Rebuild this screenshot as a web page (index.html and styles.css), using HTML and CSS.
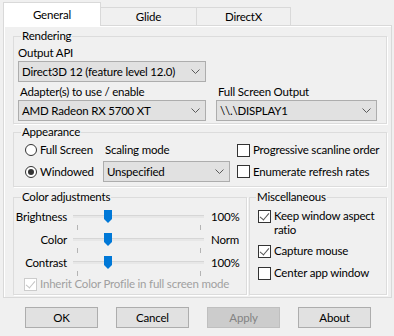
FILE: index.html
```html
<!DOCTYPE html>
<html lang="en">
<head>
    <meta charset="UTF-8">
    <title>Settings</title>
    <link rel="stylesheet" href="styles.css">
</head>
<body>
    <div class="dialog">
        <div class="tabs">
            <div class="tab active">General</div>
            <div class="tab glide">Glide</div>
            <div class="tab directx">DirectX</div>
        </div>

        <div class="panel">
            <fieldset class="group rendering">
                <legend>Rendering</legend>
                <div class="label">Output API</div>
                <div class="select wide">Direct3D 12 (feature level 12.0)<svg class="chevron" width="9" height="5" viewBox="0 0 9 5"><polyline points="0.5,0.5 4.5,4.5 8.5,0.5"/></svg></div>
                <div class="render-row">
                    <div>
                        <div class="label">Adapter(s) to use / enable</div>
                        <div class="select">AMD Radeon RX 5700 XT<svg class="chevron" width="9" height="5" viewBox="0 0 9 5"><polyline points="0.5,0.5 4.5,4.5 8.5,0.5"/></svg></div>
                    </div>
                    <div>
                        <div class="label">Full Screen Output</div>
                        <div class="select">\\.\DISPLAY1<svg class="chevron" width="9" height="5" viewBox="0 0 9 5"><polyline points="0.5,0.5 4.5,4.5 8.5,0.5"/></svg></div>
                    </div>
                </div>
            </fieldset>

            <fieldset class="group appearance">
                <legend>Appearance</legend>
                <div class="appearance-grid">
                    <div class="option"><span class="radio"></span>Full Screen</div>
                    <div class="label scaling-label">Scaling mode</div>
                    <div class="option"><span class="check"></span>Progressive scanline order</div>
                    <div class="option"><span class="radio on"></span>Windowed</div>
                    <div class="select scaling">Unspecified<svg class="chevron" width="9" height="5" viewBox="0 0 9 5"><polyline points="0.5,0.5 4.5,4.5 8.5,0.5"/></svg></div>
                    <div class="option"><span class="check"></span>Enumerate refresh rates</div>
                </div>
            </fieldset>

            <div class="bottom-groups">
                <fieldset class="group colors">
                    <legend>Color adjustments</legend>
                    <div class="slider-row">
                        <div class="slider-label">Brightness</div>
                        <div class="slider"><div class="track"></div><span class="thumb"></span><span class="tick left"></span><span class="tick right"></span></div>
                        <div class="slider-value">100%</div>
                    </div>
                    <div class="slider-row">
                        <div class="slider-label">Color</div>
                        <div class="slider"><div class="track"></div><span class="thumb"></span><span class="tick left"></span><span class="tick right"></span></div>
                        <div class="slider-value">Norm</div>
                    </div>
                    <div class="slider-row">
                        <div class="slider-label">Contrast</div>
                        <div class="slider"><div class="track"></div><span class="thumb"></span><span class="tick left"></span><span class="tick right"></span></div>
                        <div class="slider-value">100%</div>
                    </div>
                    <div class="option disabled inherit"><span class="check checked"></span>Inherit Color Profile in full screen mode</div>
                </fieldset>

                <fieldset class="group misc">
                    <legend>Miscellaneous</legend>
                    <div class="option two-line"><span class="check checked"></span><span>Keep window aspect<br>ratio</span></div>
                    <div class="option"><span class="check checked"></span>Capture mouse</div>
                    <div class="option"><span class="check"></span>Center app window</div>
                </fieldset>
            </div>
        </div>

        <div class="buttons">
            <button class="button">OK</button>
            <button class="button">Cancel</button>
            <button class="button" disabled>Apply</button>
            <button class="button">About</button>
        </div>
    </div>
</body>
</html>
```

FILE: styles.css
```css
* {
    box-sizing: border-box;
}

body {
    margin: 0;
    width: 394px;
    height: 336px;
    overflow: hidden;
    background: #f0f0f0;
    font-family: Lato, "Noto Sans", sans-serif;
    font-size: 11.5px;
    letter-spacing: -0.2px;
    color: #000;
}

.dialog {
    padding: 2px 0 0 3px;
}

/* tabs */
.tabs {
    display: flex;
    align-items: flex-end;
    height: 23px;
}

.tab {
    height: 18px;
    line-height: 18px;
    text-align: center;
    background: #f0f0f0;
    border: 1px solid #d9d9d9;
    border-left: none;
    border-bottom: none;
}

.tab.active {
    width: 98px;
    height: 24px;
    line-height: 24px;
    margin-bottom: -1px;
    background: #fff;
    border-left: 1px solid #d9d9d9;
    position: relative;
    z-index: 1;
}

.tab.glide {
    width: 96px;
}

.tab.directx {
    width: 94px;
}

.panel {
    width: 389px;
    padding: 2px 4px 2px 9px;
    border: 1px solid #d9d9d9;
    box-shadow: inset 1px 1px 0 #fff;
}

/* group boxes */
.group {
    margin: 0;
    min-width: 0;
    border: 1px solid #dcdcdc;
    box-shadow: 1px 1px 0 #fff;
}

.group legend {
    padding: 0 1px;
    line-height: 16px;
}

.label {
    line-height: 16px;
}

.select {
    position: relative;
    height: 21px;
    line-height: 19px;
    padding-left: 3px;
    background: #e1e1e1;
    border: 1px solid #adadad;
    white-space: nowrap;
}

.chevron {
    position: absolute;
    right: 5px;
    top: 7px;
    fill: none;
    stroke: #5a5a5a;
    stroke-width: 1;
}

/* rendering */
.rendering {
    padding: 1px 9px 2px 4px;
}

.rendering legend {
    margin-left: 3px;
}

.select.wide {
    width: 188px;
}

.render-row {
    display: grid;
    grid-template-columns: 188px 161px;
    column-gap: 10px;
    margin-top: 2px;
}

.render-row .label {
    padding-left: 2px;
}

/* appearance */
.appearance {
    padding: 2px 4px 4px 11px;
}

.appearance legend {
    margin-left: -4px;
}

.appearance-grid {
    display: grid;
    grid-template-columns: 78px 134px 1fr;
    grid-template-rows: 16px 21px;
    row-gap: 3px;
    align-items: center;
}

.scaling-label {
    padding-left: 2px;
}

.select.scaling {
    width: 127px;
}

.option {
    display: flex;
    align-items: center;
    line-height: 16px;
    white-space: nowrap;
}

.radio {
    flex: none;
    width: 12px;
    height: 12px;
    margin-right: 3px;
    border: 1px solid #333;
    border-radius: 50%;
    background: #fff;
    display: flex;
    align-items: center;
    justify-content: center;
}

.radio.on::after {
    content: "";
    width: 6px;
    height: 6px;
    border-radius: 50%;
    background: #333;
}

.check {
    position: relative;
    flex: none;
    width: 13px;
    height: 13px;
    margin-right: 3px;
    border: 1px solid #333;
    background: #fff;
}

.check.checked::after {
    content: "";
    position: absolute;
    left: 3px;
    top: 0;
    width: 4px;
    height: 8px;
    border-right: 1px solid #555;
    border-bottom: 1px solid #555;
    transform: rotate(40deg);
}

.disabled {
    color: #a0a0a0;
}

.disabled .check {
    border-color: #ccc;
}

.disabled .check.checked::after {
    border-color: #c4c4c4;
}

/* bottom groups */
.bottom-groups {
    display: flex;
    gap: 2px;
    margin-top: 2px;
}

.colors {
    width: 234px;
    padding: 0 0 2px 0;
}

.colors legend {
    margin-left: 7px;
}

.slider-row {
    display: grid;
    grid-template-columns: 53px 131px 1fr;
    column-gap: 6px;
    height: 23px;
    align-items: center;
}

.slider-label {
    text-align: right;
}

.slider-value {
    padding-left: 1px;
}

.slider {
    position: relative;
    height: 23px;
}

.track {
    position: absolute;
    left: 0;
    right: 0;
    top: 10px;
    height: 3px;
    background: #e7e7e7;
    border-top: 1px solid #d6d6d6;
}

.thumb {
    position: absolute;
    left: 31px;
    top: 5px;
    width: 8px;
    height: 13px;
    background: #0078d7;
    clip-path: polygon(0 0, 100% 0, 100% 70%, 50% 100%, 0 70%);
}

.tick {
    position: absolute;
    top: 20px;
    width: 1px;
    height: 5px;
    background: #b4b4b4;
}

.tick.left {
    left: 4px;
}

.tick.right {
    left: 127px;
}

.inherit {
    margin: 2px 0 0 10px;
}

.misc {
    flex: 1;
    padding: 4px 4px 0 8px;
}

.misc legend {
    margin-left: -2px;
}

.misc .option {
    margin-bottom: 6px;
}

.option.two-line {
    align-items: flex-start;
    line-height: 14px;
}

.option.two-line .check {
    margin-top: 1px;
}

/* buttons */
.buttons {
    display: flex;
    gap: 18px;
    margin-top: 9px;
    padding-left: 22px;
}

.button {
    width: 73px;
    height: 21px;
    padding: 0;
    font-family: inherit;
    font-size: 11.5px;
    letter-spacing: -0.2px;
    color: #000;
    background: #e1e1e1;
    border: 1px solid #adadad;
}

.button:disabled {
    color: #838383;
    background: #cccccc;
    border-color: #bfbfbf;
}
```
